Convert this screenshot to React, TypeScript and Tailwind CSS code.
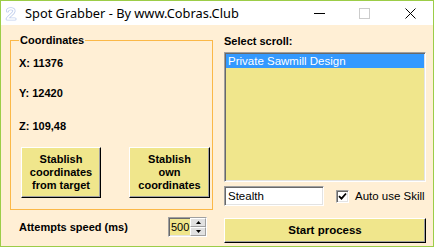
import React from "react";

const sunken =
  "border border-t-[#a0a0a0] border-l-[#a0a0a0] border-b-white border-r-white shadow-[inset_1px_1px_0_#696969,inset_-1px_-1px_0_#e3e3e3]";
const raised =
  "border border-t-white border-l-white border-b-black border-r-black shadow-[inset_-1px_-1px_0_#a0a0a0] bg-[#f0e68c]";

function TitleIcon() {
  return (
    <svg width="12" height="14" viewBox="0 0 12 14" className="ml-[4px] mt-[1px]">
      <path
        d="M2.5 4 C2.5 1.2, 9.5 0.8, 9 4.2 C8.6 6.8, 3.5 9, 2.2 12 L10 12"
        fill="none"
        stroke="#c2d0ee"
        strokeWidth="3.2"
        strokeLinecap="round"
        strokeLinejoin="round"
      />
      <path
        d="M2.5 4 C2.5 1.2, 9.5 0.8, 9 4.2 C8.6 6.8, 3.5 9, 2.2 12 L10 12"
        fill="none"
        stroke="#ffffff"
        strokeWidth="1.4"
        strokeLinecap="round"
        strokeLinejoin="round"
      />
    </svg>
  );
}

export default function App() {
  return (
    <div className="w-[434px] h-[247px] border border-[#9ccd48] bg-[#ffefd5] flex flex-col overflow-hidden font-['Liberation_Sans',Arial,sans-serif] text-black">
      {/* Title bar */}
      <div className="h-[24px] bg-white flex items-center shrink-0">
        <TitleIcon />
        <span className="ml-[8px] text-[12.8px] leading-[16px] text-black font-['Noto_Sans','Liberation_Sans',sans-serif]">
          Spot Grabber - By www.Cobras.Club
        </span>
        <div className="flex-1" />
        <svg width="12" height="12" viewBox="0 0 12 12" className="mr-[33px]">
          <line x1="0" y1="6.5" x2="11" y2="6.5" stroke="#000" strokeWidth="1" />
        </svg>
        <svg width="11" height="11" viewBox="0 0 11 11" className="mr-[35px]">
          <rect x="0.5" y="0.5" width="10" height="10" fill="none" stroke="#cccccc" strokeWidth="1" />
        </svg>
        <svg width="11" height="11" viewBox="0 0 11 11" className="mr-[17px]">
          <line x1="0.5" y1="0.5" x2="10.5" y2="10.5" stroke="#000" strokeWidth="1" />
          <line x1="10.5" y1="0.5" x2="0.5" y2="10.5" stroke="#000" strokeWidth="1" />
        </svg>
      </div>

      {/* Content */}
      <div className="flex-1 flex">
        {/* Left column */}
        <div className="ml-[9px] w-[203px] flex flex-col">
          <fieldset className="mt-[9px] h-[176px] border border-[#fbb848] m-0 p-0 min-w-0">
            <legend className="ml-[8px] px-[1px] text-[11px] leading-[13px] font-bold">Coordinates</legend>
            <div className="pl-[8px] pt-[10px] text-[11px] leading-[13px] font-bold flex flex-col">
              <div>X: 11376</div>
              <div className="mt-[17px]">Y: 12420</div>
              <div className="mt-[20px]">Z: 109,48</div>
            </div>
            <div className="mt-[14px] flex pl-[10px] gap-[28px]">
              <button className={`${raised} w-[80px] h-[51px] text-[11px] leading-[13px] font-bold flex flex-col items-center justify-center`}>
                <span>Stablish</span>
                <span>coordinates</span>
                <span>from target</span>
              </button>
              <button className={`${raised} w-[81px] h-[51px] text-[11px] leading-[13px] font-bold flex flex-col items-center justify-center`}>
                <span>Stablish</span>
                <span>own</span>
                <span>coordinates</span>
              </button>
            </div>
          </fieldset>
          <div className="mt-[7px] h-[20px] flex items-center justify-between pl-[9px] pr-[6px]">
            <span className="text-[11px] leading-[13px] font-bold">Attempts speed (ms)</span>
            <div className={`${sunken} w-[39px] h-[20px] flex bg-[#f0e68c]`}>
              <span className="flex-1 text-[11px] leading-[18px] pl-[2px] text-black">500</span>
              <div className="w-[16px] flex flex-col">
                <div className="flex-1 bg-[#e1e1e1] border border-t-white border-l-white border-b-[#a0a0a0] border-r-[#a0a0a0] flex items-center justify-center">
                  <svg width="5" height="3" viewBox="0 0 5 3"><path d="M2.5 0 L5 3 L0 3 Z" fill="#000" /></svg>
                </div>
                <div className="flex-1 bg-[#e1e1e1] border border-t-white border-l-white border-b-[#a0a0a0] border-r-[#a0a0a0] flex items-center justify-center">
                  <svg width="5" height="3" viewBox="0 0 5 3"><path d="M0 0 L5 0 L2.5 3 Z" fill="#000" /></svg>
                </div>
              </div>
            </div>
          </div>
        </div>

        {/* Right column */}
        <div className="ml-[11px] w-[202px] flex flex-col">
          <div className="mt-[10px] text-[11px] leading-[13px] font-bold">Select scroll:</div>
          <div className={`${sunken} mt-[4px] h-[130px] bg-[#f0e68c] p-[1px]`}>
            <div className="h-[14px] bg-[#3399ff] text-white text-[11.5px] leading-[14px] pl-[2px]">
              Private Sawmill Design
            </div>
          </div>
          <div className="mt-[4px] h-[20px] flex items-center">
            <div className={`${sunken} w-[100px] h-[20px] bg-white text-[11.5px] leading-[18px] pl-[3px]`}>Stealth</div>
            <div className={`${sunken} ml-[12px] w-[13px] h-[13px] bg-white flex items-center justify-center`}>
              <svg width="9" height="9" viewBox="0 0 9 9">
                <path d="M1 4.2 L3.5 6.7 L8 1.5" fill="none" stroke="#000" strokeWidth="1.8" />
              </svg>
            </div>
            <span className="ml-[6px] text-[11.5px] leading-[13px]">Auto use Skill</span>
          </div>
          <button className={`${raised} mt-[12px] h-[25px] text-[11.5px] leading-[13px] font-bold flex items-center justify-center`}>
            Start process
          </button>
        </div>
      </div>
    </div>
  );
}
